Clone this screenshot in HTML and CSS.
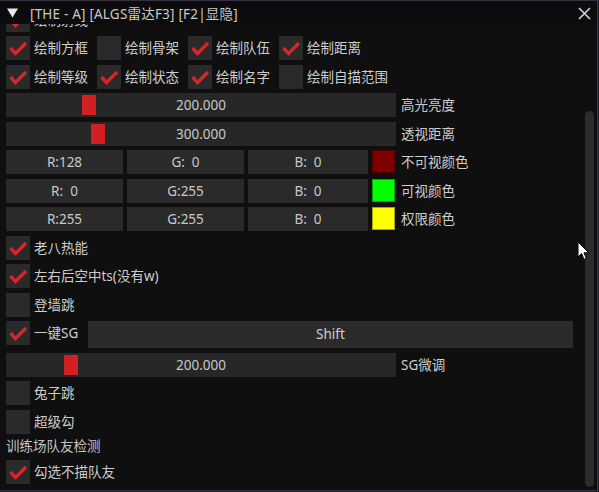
FILE: index.html
```html
<!DOCTYPE html>
<html lang="zh">
<head>
<meta charset="utf-8">
<title>ALGS</title>
<link rel="stylesheet" href="styles.css">
</head>
<body>
<div class="window">
  <div class="titlebar">
    <svg class="tri" width="11" height="10" viewBox="0 0 11 10"><polygon points="0,0.5 11,0.5 5.5,9.5" fill="#e8e8e8"/></svg>
    <span class="title">[THE - A] [ALGS雷达F3] [F2|显隐]</span>
    <svg class="close" width="13" height="13" viewBox="0 0 13 13"><path d="M1 1L12 12M12 1L1 12" stroke="#d6d6d6" stroke-width="1.6" fill="none"/></svg>
  </div>
  <div class="content">
    <div class="main">
      <div class="cbrow">
        <label class="check"><span class="box on"><svg viewBox="0 0 24 24"><polyline points="4.5,12 9.5,17.5 20,7"/></svg></span>绘制射线</label>
      </div>
      <div class="cbrow">
        <label class="check"><span class="box on"><svg viewBox="0 0 24 24"><polyline points="4.5,12 9.5,17.5 20,7"/></svg></span>绘制方框</label>
        <label class="check"><span class="box"></span>绘制骨架</label>
        <label class="check"><span class="box on"><svg viewBox="0 0 24 24"><polyline points="4.5,12 9.5,17.5 20,7"/></svg></span>绘制队伍</label>
        <label class="check"><span class="box on"><svg viewBox="0 0 24 24"><polyline points="4.5,12 9.5,17.5 20,7"/></svg></span>绘制距离</label>
      </div>
      <div class="cbrow">
        <label class="check"><span class="box on"><svg viewBox="0 0 24 24"><polyline points="4.5,12 9.5,17.5 20,7"/></svg></span>绘制等级</label>
        <label class="check"><span class="box on"><svg viewBox="0 0 24 24"><polyline points="4.5,12 9.5,17.5 20,7"/></svg></span>绘制状态</label>
        <label class="check"><span class="box on"><svg viewBox="0 0 24 24"><polyline points="4.5,12 9.5,17.5 20,7"/></svg></span>绘制名字</label>
        <label class="check"><span class="box"></span>绘制自描范围</label>
      </div>
      <div class="slrow">
        <div class="slider"><span class="grab" style="left:76px"></span><span class="val">200.000</span></div>
        <span class="lbl">高光亮度</span>
      </div>
      <div class="slrow">
        <div class="slider"><span class="grab" style="left:85px"></span><span class="val">300.000</span></div>
        <span class="lbl">透视距离</span>
      </div>
      <div class="colrow">
        <div class="field">R:128</div>
        <div class="field">G:  0</div>
        <div class="field">B:  0</div>
        <div class="swatch maroon"></div>
        <span class="lbl">不可视颜色</span>
      </div>
      <div class="colrow">
        <div class="field">R:  0</div>
        <div class="field">G:255</div>
        <div class="field">B:  0</div>
        <div class="swatch green"></div>
        <span class="lbl">可视颜色</span>
      </div>
      <div class="colrow">
        <div class="field">R:255</div>
        <div class="field">G:255</div>
        <div class="field">B:  0</div>
        <div class="swatch yellow"></div>
        <span class="lbl">权限颜色</span>
      </div>
      <label class="check"><span class="box on"><svg viewBox="0 0 24 24"><polyline points="4.5,12 9.5,17.5 20,7"/></svg></span>老八热能</label>
      <label class="check"><span class="box on"><svg viewBox="0 0 24 24"><polyline points="4.5,12 9.5,17.5 20,7"/></svg></span>左右后空中ts(没有w)</label>
      <label class="check"><span class="box"></span>登墙跳</label>
      <div class="sgrow">
        <label class="check"><span class="box on"><svg viewBox="0 0 24 24"><polyline points="4.5,12 9.5,17.5 20,7"/></svg></span>一键SG</label>
        <div class="button">Shift</div>
      </div>
      <div class="slrow">
        <div class="slider"><span class="grab" style="left:58px"></span><span class="val">200.000</span></div>
        <span class="lbl">SG微调</span>
      </div>
      <label class="check"><span class="box"></span>兔子跳</label>
      <label class="check"><span class="box"></span>超级勾</label>
      <div class="text">训练场队友检测</div>
      <label class="check"><span class="box on"><svg viewBox="0 0 24 24"><polyline points="4.5,12 9.5,17.5 20,7"/></svg></span>勾选不描队友</label>
    </div>
    <div class="scrollbar"><div class="thumb"></div></div>
  </div>
  <svg class="cursor" width="13" height="20" viewBox="0 0 13 20"><path d="M1 1 L1 16 L4.6 12.6 L7 18.4 L9.4 17.4 L7 11.8 L11.8 11.8 Z" fill="#ffffff" stroke="#000000" stroke-width="1" stroke-linejoin="round"/></svg>
</div>
</body>
</html>
```

FILE: styles.css
```css
html, body {
  margin: 0;
  padding: 0;
}
body {
  background: #1c1928;
  width: 599px;
  height: 492px;
  overflow: hidden;
  font-family: "Noto Sans", "Noto Sans CJK SC", sans-serif;
  font-size: 13.5px;
  color: #cdcdcd;
}
.window {
  position: relative;
  box-sizing: border-box;
  width: 598px;
  height: 491px;
  background: #0f0f0f;
  border-top: 1px solid #34303f;
  border-right: 1px solid #3e3656;
  border-bottom: 1px solid #34303f;
  overflow: hidden;
}
.titlebar {
  position: relative;
  z-index: 1;
  display: flex;
  align-items: center;
  height: 23px;
  padding-left: 7px;
  background: #0c0c0c;
}
.tri {
  display: block;
  flex: none;
}
.title {
  margin-left: 12px;
  margin-top: 3px;
  line-height: 20px;
  color: #c9c9c9;
  letter-spacing: 0.2px;
  white-space: pre;
}
.close {
  display: block;
  margin-left: auto;
  margin-right: 6px;
  margin-top: 1px;
}
.content {
  display: flex;
  height: 466px;
  overflow: hidden;
}
.main {
  display: flex;
  flex-direction: column;
  gap: 4.5px;
  width: 567px;
  padding-left: 6px;
  margin-top: -16.5px;
  flex: none;
  line-height: 24px;
}
.cbrow {
  display: grid;
  grid-template-columns: repeat(4, 87px);
  column-gap: 4px;
}
.check {
  display: flex;
  align-items: center;
  gap: 4px;
  height: 24px;
  white-space: nowrap;
}
.box {
  display: block;
  flex: none;
  width: 24px;
  height: 24px;
  background: #2a2a2a;
}
.box svg {
  display: block;
  width: 24px;
  height: 24px;
}
.box polyline {
  fill: none;
  stroke: #d4262b;
  stroke-width: 3.4;
}
.slrow {
  display: grid;
  grid-template-columns: 390px 1fr;
  column-gap: 5px;
  height: 24px;
}
.slider {
  position: relative;
  height: 24px;
  background: #272727;
  text-align: center;
}
.grab {
  position: absolute;
  top: 2px;
  width: 14px;
  height: 20px;
  background: #d21f23;
}
.val {
  position: relative;
  color: #c8c8c8;
}
.lbl {
  white-space: nowrap;
}
.colrow {
  display: grid;
  grid-template-columns: 117px 117px 120px 23px 1fr;
  column-gap: 4px;
  height: 24px;
}
.colrow .lbl {
  margin-left: 2px;
}
.field {
  background: #2a2a2a;
  text-align: center;
  white-space: pre;
  color: #c8c8c8;
}
.swatch {
  height: 23px;
  box-sizing: border-box;
  border: 1px solid rgba(0, 0, 0, 0.35);
}
.maroon { background: #800000; }
.green { background: #00ff00; }
.yellow { background: #ffff00; }
.sgrow {
  display: grid;
  grid-template-columns: 78px 1fr;
  column-gap: 4px;
  height: 27px;
  align-items: start;
}
.button {
  height: 27px;
  line-height: 27px;
  background: #2b2b2b;
  text-align: center;
  color: #d0d0d0;
}
.text {
  height: 17.5px;
  line-height: 17.5px;
  color: #c4c4c4;
}
.scrollbar {
  flex: none;
  width: 9px;
  margin-left: 12px;
}
.thumb {
  margin-top: 87px;
  height: 376px;
  border-radius: 5px;
  background: #2c2c2c;
}
.cursor {
  position: absolute;
  left: 577px;
  top: 240px;
}
```
